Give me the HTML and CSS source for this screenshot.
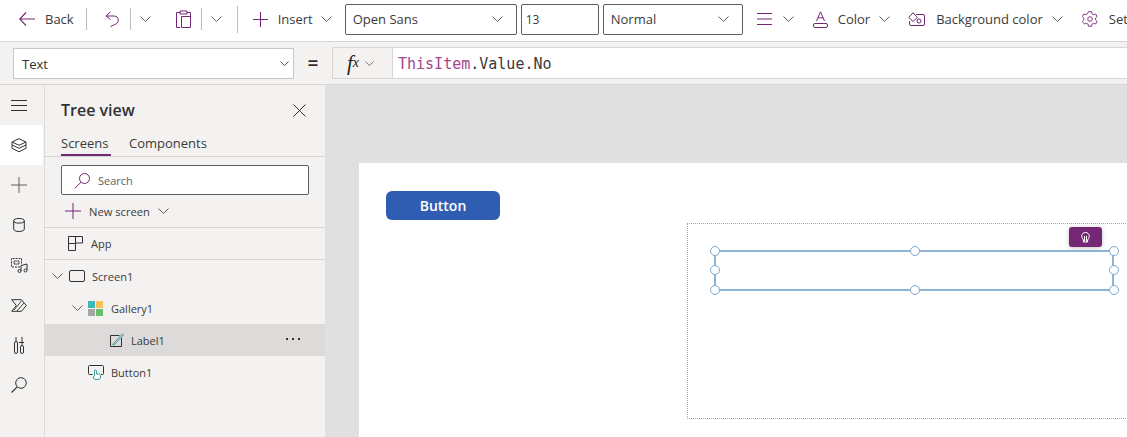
FILE: index.html
```html
<!DOCTYPE html>
<html lang="en">
<head>
<meta charset="utf-8">
<title>Tree view</title>
<link rel="stylesheet" href="styles.css">
</head>
<body>
<svg class="defs" width="0" height="0" aria-hidden="true">
  <symbol id="chev" viewBox="0 0 11 6"><path d="M.5.5 5.500 5.500 10.500.5" fill="none" stroke="currentColor"/></symbol>
</svg>
<header class="toolbar">
  <svg class="ic m-back" width="16" height="14" viewBox="0 0 16 14"><path d="M7 .5.800 7 7 13.500M.8 7H16" fill="none" stroke="#742774" stroke-width="1.100"/></svg>
  <span class="tb-text m-backtext">Back</span>
  <i class="sep m-s1"></i>
  <svg class="ic m-undo" width="15" height="16" viewBox="0 0 15 16"><path d="M5.500.8 1 5l4.500 3.500M1 5h8.500a4.200 4.200 0 0 1 1.800 7.800L5.500 15.500" fill="none" stroke="#742774"/></svg>
  <i class="sep m-s2"></i>
  <svg class="chev m-c1"><use href="#chev"/></svg>
  <svg class="ic m-paste" width="15" height="18" viewBox="0 0 15 18"><path d="M4 2.500H.5v15h3.500M11 2.500h3.500v15H5.500v-11H14M4 4V1h7v3z" fill="none" stroke="#742774"/></svg>
  <i class="sep m-s3"></i>
  <svg class="chev m-c2"><use href="#chev"/></svg>
  <i class="sep tall m-s4"></i>
  <svg class="ic m-plus" width="15" height="15" viewBox="0 0 15 15"><path d="M7.500 0v15M0 7.500h15" stroke="#742774" stroke-width="1.100"/></svg>
  <span class="tb-text m-insert">Insert</span>
  <svg class="chev m-c3"><use href="#chev"/></svg>
  <div class="tb-select w-font"><span>Open Sans</span><svg class="chev"><use href="#chev"/></svg></div>
  <div class="tb-select w-size"><span class="size-text">13</span></div>
  <div class="tb-select w-normal"><span>Normal</span><svg class="chev"><use href="#chev"/></svg></div>
  <svg class="ic m-align" width="15" height="12" viewBox="0 0 15 12"><path d="M0 .5h15M0 6h15M0 11.500h15" stroke="#742774"/></svg>
  <svg class="chev m-c4"><use href="#chev"/></svg>
  <svg class="ic m-color" width="15" height="17" viewBox="0 0 15 17"><path d="M3.500 10 7.500 .8 11.500 10M5 6.800h5" fill="none" stroke="#742774"/><rect x=".5" y="12.500" width="14" height="4" rx="1.500" fill="none" stroke="#742774"/></svg>
  <span class="tb-text m-colortext">Color</span>
  <svg class="chev m-c5"><use href="#chev"/></svg>
  <svg class="ic m-bg" width="17" height="15" viewBox="0 0 17 15"><path d="M8 2.500h7a1.500 1.500 0 0 1 1.500 1.500v8a1.500 1.500 0 0 1-1.500 1.500H3A1.500 1.500 0 0 1 1.500 12V9" fill="none" stroke="#742774"/><path d="M5 .8.800 5.500 5 9.500 9.300 5.500z" fill="#fff" stroke="#742774"/><circle cx="11" cy="9" r="2" fill="none" stroke="#742774"/></svg>
  <span class="tb-text m-bgtext">Background color</span>
  <svg class="chev m-c6"><use href="#chev"/></svg>
  <svg class="ic m-gear" width="16" height="16" viewBox="0 0 16 16"><path d="M6.500.7h3l.5 2.200 1.500.8 2.100-.7 1.500 2.600-1.600 1.500v1.800l1.600 1.500-1.500 2.600-2.100-.7-1.500.8-.5 2.200h-3l-.5-2.200-1.500-.8-2.100.7L.3 10.400l1.600-1.500V7.100L.3 5.600l1.500-2.600 2.100.7 1.500-.8z" fill="none" stroke="#742774" stroke-width=".9"/><circle cx="8" cy="8" r="2.300" fill="none" stroke="#742774" stroke-width=".9"/></svg>
  <span class="tb-text m-settext">Set</span>
</header>

<section class="formula">
  <div class="prop"><span>Text</span><svg class="chev dark"><use href="#chev"/></svg></div>
  <span class="equals">=</span>
  <div class="fx-wrap">
    <div class="fx-btn"><span class="fx">f<span class="fx-x">x</span></span><svg class="chev small"><use href="#chev"/></svg></div>
    <div class="fx-input"><span class="kw">ThisItem</span>.Value.No</div>
  </div>
</section>

<main class="main">
  <nav class="rail">
    <div class="rail-item"><svg width="16" height="11" viewBox="0 0 16 11"><path d="M0 .5h16M0 5.500h16M0 10.500h16" stroke="#323130"/></svg></div>
    <div class="rail-item active"><svg width="16" height="15" viewBox="0 0 16 15"><path d="M8 .7 15 4 8 7.300 1 4zM1 7l7 3.300L15 7M1 10.300l7 3.500 7-3.500M1 4v6.300M15 4v6.300" fill="none" stroke="#323130"/></svg></div>
    <div class="rail-item"><svg width="16" height="16" viewBox="0 0 16 16"><path d="M8 0v16M0 8h16" stroke="#605e5c"/></svg></div>
    <div class="rail-item"><svg width="12" height="14" viewBox="0 0 12 14"><ellipse cx="6" cy="2.800" rx="5.300" ry="2.300" fill="none" stroke="#323130"/><path d="M.7 2.800v8.400c0 1.300 2.400 2.300 5.300 2.300s5.300-1 5.300-2.300V2.800" fill="none" stroke="#323130"/></svg></div>
    <div class="rail-item"><svg width="17" height="15" viewBox="0 0 17 15"><path d="M9 9H.5V.5h10V6" fill="none" stroke="#323130" stroke-dasharray="2 1"/><path d="M3 3h5v3H3z" fill="none" stroke="#323130" stroke-width=".8"/><path d="M10 13V7.500L16 6v6" fill="none" stroke="#323130"/><circle cx="8.500" cy="13" r="1.500" fill="none" stroke="#323130"/><circle cx="14.500" cy="12.500" r="1.500" fill="none" stroke="#323130"/></svg></div>
    <div class="rail-item"><svg width="16" height="13" viewBox="0 0 16 13"><path d="M.7.700H10.500L15.300 6.500 10.500 12.300H.7L5.300 6.500z" fill="none" stroke="#323130"/><path d="M3 11 10.500 2M6 12 13 4" stroke="#323130" stroke-width=".9"/></svg></div>
    <div class="rail-item"><svg width="10" height="17" viewBox="0 0 10 17"><rect x=".5" y="4.500" width="3" height="12" rx="1.500" fill="none" stroke="#323130"/><rect x="6.500" y="8.500" width="3" height="8" rx="1.500" fill="none" stroke="#323130"/><path d="M2 0v4.500M8 0v8.500M5 5.500h5" stroke="#323130"/></svg></div>
    <div class="rail-item"><svg width="16" height="16" viewBox="0 0 16 16"><circle cx="10" cy="6" r="5.300" fill="none" stroke="#323130"/><path d="M6.200 9.800.5 15.500" stroke="#323130" stroke-width="1.100"/></svg></div>
  </nav>

  <aside class="panel">
    <div class="panel-head"><h2 class="panel-title">Tree view</h2><svg class="close" width="13" height="13" viewBox="0 0 13 13"><path d="M.5.500l12 12M12.500.500l-12 12" stroke="#323130"/></svg></div>
    <div class="tabs"><span class="tab on">Screens</span><span class="tab">Components</span></div>
    <div class="search"><svg width="17" height="17" viewBox="0 0 17 17"><circle cx="10.500" cy="6.500" r="5" fill="none" stroke="#742774"/><path d="M7 10.300.8 16.300" stroke="#742774"/></svg><span>Search</span></div>
    <div class="new-screen"><svg width="16" height="16" viewBox="0 0 16 16"><path d="M8 0v16M0 8h16" stroke="#742774"/></svg><span>New screen</span><svg class="chev"><use href="#chev"/></svg></div>
    <div class="tree-row app">
      <svg class="node-ic" width="15" height="15" viewBox="0 0 15 15"><path d="M.5.500h14v6.500H7.500v7.500H.5zM7.500.500V7M.5 7.500h7" fill="none" stroke="#323130"/></svg>
      <span>App</span>
    </div>
    <div class="tree-row lvl1">
      <svg class="chev tree-chev"><use href="#chev"/></svg>
      <svg class="node-ic" width="16" height="12" viewBox="0 0 16 12"><rect x=".5" y=".5" width="15" height="11" rx="1.500" fill="none" stroke="#323130"/></svg>
      <span>Screen1</span>
    </div>
    <div class="tree-row lvl2">
      <svg class="chev tree-chev"><use href="#chev"/></svg>
      <svg class="node-ic" width="15" height="15" viewBox="0 0 15 15"><rect width="7" height="7" fill="#3fb7b9"/><rect x="8" width="7" height="7" fill="#f6c15b"/><rect y="8" width="7" height="7" fill="#a6a6a6"/><rect x="8" y="8" width="7" height="7" fill="#6cbd6e"/></svg>
      <span>Gallery1</span>
    </div>
    <div class="tree-row lvl3 selected">
      <svg class="node-ic" width="14" height="14" viewBox="0 0 14 14"><path d="M9.500 2.500H.5v11h11V5" fill="none" stroke="#323130"/><path d="M2.500 11.500 12.500.8l1 1L4 12z" fill="none" stroke="#3a9c9e"/></svg>
      <span>Label1</span>
      <svg class="more" width="14" height="2" viewBox="0 0 14 2"><rect width="2" height="2" fill="#323130"/><rect x="6" width="2" height="2" fill="#323130"/><rect x="12" width="2" height="2" fill="#323130"/></svg>
    </div>
    <div class="tree-row lvl2b">
      <svg class="node-ic" width="16" height="15" viewBox="0 0 16 15"><path d="M4.500 9.500H1.500A1 1 0 0 1 .5 8.500V1.500A1 1 0 0 1 1.500.5h13a1 1 0 0 1 1 1v7a1 1 0 0 1-1 1H13" fill="none" stroke="#323130"/><path d="M6.500 11V6a1 1 0 0 1 2 0v3h2.500a1.500 1.500 0 0 1 1.500 1.500V12a2.500 2.500 0 0 1-2.500 2.500H8A3 3 0 0 1 5 12z" fill="#fff" stroke="#3a9c9e"/></svg>
      <span>Button1</span>
    </div>
  </aside>

  <section class="canvas">
    <div class="screen">
      <button class="app-btn">Button</button>
      <div class="gallery"></div>
      <div class="label-box"></div>
      <i class="handle h-tl"></i><i class="handle h-tc"></i><i class="handle h-tr"></i>
      <i class="handle h-ml"></i><i class="handle h-mr"></i>
      <i class="handle h-bl"></i><i class="handle h-bc"></i><i class="handle h-br"></i>
      <div class="badge"><svg width="9" height="11" viewBox="0 0 9 11"><path d="M4.500.5C2.300.5.700 2.100.700 4.200c0 1.700 1.100 2.500 1.700 3.800v2h4.200V8c.6-1.300 1.700-2.100 1.700-3.800C8.300 2.100 6.700.5 4.500.5zM3.500 9.500V4M5.500 9.500V4" fill="none" stroke="#fff"/></svg></div>
    </div>
  </section>
</main>
</body>
</html>
```
FILE: styles.css
```css
* { box-sizing: border-box; }
html, body { margin: 0; padding: 0; height: 100%; overflow: hidden; }
body { width: 1127px; height: 437px; background: #fff; color: #323130; font: 13px "Open Sans", sans-serif; }
.defs { position: absolute; }
svg { display: block; flex: none; }
.chev { width: 11px; height: 6px; color: #605e5c; }

.toolbar { display: flex; align-items: center; height: 42px; width: 1127px; overflow: hidden; background: #fff; border-bottom: 1px solid #d6d5d4; padding-bottom: 3px; white-space: nowrap; }
.tb-text { font-size: 13px; color: #3b3a39; flex: none; }
.sep { display: block; width: 1px; height: 22px; background: #bdbcbb; flex: none; }
.sep.tall { height: 27px; }
.m-back { margin-left: 19px; }
.m-backtext { margin-left: 10px; }
.m-s1 { margin-left: 12px; }
.m-undo { margin-left: 18px; }
.m-s2 { margin-left: 10px; }
.m-c1 { margin-left: 9px; }
.m-paste { margin-left: 25px; }
.m-s3 { margin-left: 10px; }
.m-c2 { margin-left: 9px; }
.m-s4 { margin-left: 15px; }
.m-plus { margin-left: 15px; }
.m-insert { margin-left: 10px; }
.m-c3 { margin-left: 8px; }
.tb-select { display: flex; align-items: center; justify-content: space-between; height: 31px; border: 1px solid #605e5c; border-radius: 2px; background: #fff; font-size: 13px; padding: 0 7px; color: #3b3a39; flex: none; }
.w-font { width: 172px; margin-left: 13px; }
.w-size { width: 78px; margin-left: 4px; padding: 0 4px; }
.w-normal { width: 140px; margin-left: 4px; }
.tb-select .chev { margin-right: 6px; }
.size-text { font-size: 12px; }
.m-align { margin-left: 14px; }
.m-c4 { margin-left: 11px; }
.m-color { margin-left: 19px; }
.m-colortext { margin-left: 10px; }
.m-c5 { margin-left: 9px; }
.m-bg { margin-left: 18px; }
.m-bgtext { margin-left: 11px; }
.m-c6 { margin-left: 9px; }
.m-gear { margin-left: 19px; }
.m-settext { margin-left: 11px; }

.formula { display: flex; align-items: center; height: 43px; width: 1127px; background: #f3f2f1; border-bottom: 1px solid #d6d5d4; padding-left: 13px; overflow: hidden; }
.prop { display: flex; align-items: center; justify-content: space-between; width: 281px; height: 31px; background: #fff; border: 1px solid #c8c6c4; padding: 1px 4px 0 8px; font-size: 13px; flex: none; }
.chev.dark { width: 9px; height: 5px; color: #323130; }
.equals { width: 38px; text-align: center; font-size: 19px; font-weight: 600; color: #323130; flex: none; }
.fx-wrap { display: flex; height: 32px; flex: 1; background: #fff; border-top: 1px solid #d6d5d4; border-bottom: 1px solid #d6d5d4; border-left: 1px solid #d6d5d4; }
.fx-btn { display: flex; align-items: center; width: 60px; background: #f3f2f1; padding-left: 14px; border-right: 1px solid #d6d5d4; flex: none; }
.fx { font: italic 21px/1 "Liberation Serif", serif; color: #201f1e; }
.fx-x { font-size: 14px; position: relative; top: -3px; }
.chev.small { width: 9px; height: 5px; margin-left: 6px; }
.fx-input { font: 15px/32px "DejaVu Sans Mono", monospace; padding-left: 5px; color: #3b3a39; }
.kw { color: #a1488c; }

.main { display: flex; height: 352px; width: 1127px; overflow: hidden; }
.rail { width: 45px; background: #f3f2f1; border-right: 1px solid #dcdbda; flex: none; }
.rail-item { display: flex; align-items: center; justify-content: center; height: 40px; padding-right: 6px; }
.rail-item.active { background: #fff; margin-right: 1px; padding-right: 5px; }

.panel { width: 280px; background: #f3f2f1; flex: none; }
.panel-head { display: flex; align-items: center; justify-content: space-between; height: 49px; padding: 1px 19px 0 16px; }
.panel-title { margin: 0; font-size: 16px; font-weight: 600; color: #323130; }
.tabs { display: flex; gap: 18px; height: 22px; padding-left: 16px; border-bottom: 1px solid #d6d5d4; box-sizing: content-box; }
.tab { font-size: 13px; color: #3b3a39; line-height: 18px; height: 22px; }
.tab.on { border-bottom: 2px solid #742774; width: 50px; }
.search { display: flex; align-items: center; gap: 7px; width: 248px; height: 30px; margin: 8px 0 0 16px; padding-left: 12px; background: #fff; border: 1px solid #605e5c; border-radius: 2px; font-size: 11px; color: #605e5c; }
.new-screen { display: flex; align-items: center; height: 33px; padding-left: 20px; font-size: 11.200px; color: #3b3a39; border-bottom: 1px solid #d6d5d4; }
.new-screen span { margin-left: 8px; }
.new-screen .chev { margin-left: 8px; }
.tree-row { position: relative; display: flex; align-items: center; height: 32px; font-size: 11px; color: #3b3a39; }
.tree-row .node-ic { flex: none; }
.app { padding-left: 23px; gap: 8px; border-bottom: 1px solid #d6d5d4; }
.lvl1 { padding-left: 7px; }
.lvl1 .node-ic { margin-left: 6px; }
.lvl1 span { margin-left: 7px; }
.lvl2 { padding-left: 27px; }
.lvl2 .node-ic { margin-left: 5px; }
.lvl2 span { margin-left: 8px; }
.lvl3 { padding-left: 65px; }
.lvl3 span { margin-left: 7px; }
.lvl2b { padding-left: 43px; }
.lvl2b span { margin-left: 7px; }
.selected { background: #dcdbda; }
.more { position: absolute; right: 25px; top: 14px; }

.canvas { flex: 1; background: #e0e0e0; padding: 78px 0 0 34px; overflow: hidden; }
.screen { position: relative; width: 768px; height: 274px; background: #fff; }
.app-btn { position: absolute; left: 27px; top: 28px; width: 114px; height: 29px; border: 0; border-radius: 6px; background: #2f5db1; color: #fff; font: 600 14px "Open Sans", sans-serif; }
.gallery { position: absolute; left: 328px; top: 60px; width: 445px; height: 196px; border: 1px dotted #7fb0dc; }
.label-box { position: absolute; left: 355px; top: 87px; width: 400px; height: 41px; border: 2px solid #8fb5d6; }
.handle { position: absolute; width: 10px; height: 10px; margin: -5px 0 0 -5px; background: #fff; border: 1.500px solid #7ca8cf; border-radius: 50%; }
.h-tl { left: 355.500px; top: 88px; }
.h-tc { left: 555.500px; top: 88px; }
.h-tr { left: 754.500px; top: 88px; }
.h-ml { left: 355.500px; top: 107px; }
.h-mr { left: 754.500px; top: 107px; }
.h-bl { left: 355.500px; top: 127px; }
.h-bc { left: 555.500px; top: 127px; }
.h-br { left: 754.500px; top: 127px; }
.badge { position: absolute; left: 710px; top: 64px; display: flex; align-items: center; justify-content: center; width: 33px; height: 20px; background: #742774; border-radius: 3px; box-shadow: 0 1px 4px rgba(0,0,0,.25); }
```
